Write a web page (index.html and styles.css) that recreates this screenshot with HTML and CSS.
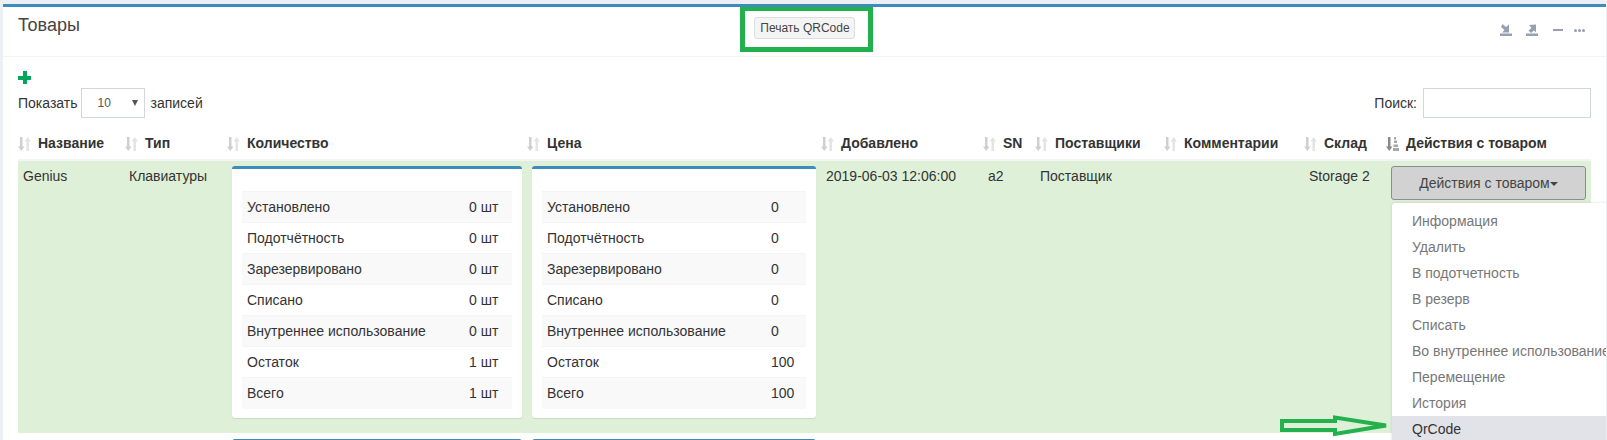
FILE: index.html
```html
<!DOCTYPE html>
<html lang="ru">
<head>
    <meta charset="UTF-8">
    <title>Товары</title>
    <link rel="stylesheet" href="styles.css">
</head>
<body>
    <!-- Sort icons, reused in every table head cell -->
    <svg class="sprites" width="0" height="0">
        <symbol id="sort-both" viewBox="0 0 13 14">
            <path d="M2 0h2.500v9.500H6.500L3.250 14 0 9.500h2z" fill="#cfcfcf"/>
            <path d="M8.500 14H11V4.500h2L9.750 0 6.500 4.500h2z" fill="#e4e4e4"/>
        </symbol>
        <symbol id="sort-active" viewBox="0 0 13 14">
            <path d="M2 0h2.500v9.500H6.500L3.250 14 0 9.500h2z" fill="#8a8a8a"/>
            <path d="M8 0h2v2.500H8zM8 3.500h3v2.500H8zM7.500 7.500h4.500v2.500H7.500zM7 11h6v3H7z" fill="#a8a8a8"/>
        </symbol>
    </svg>

    <section class="box">
        <header class="box-header">
            <h3 class="box-title">Товары</h3>
            <button class="btn-print">Печать QRCode</button>
            <div class="box-tools">
                <svg class="tool" viewBox="0 0 12 12"><path d="M0 9.500h12V12H0zM2.500 0l3.500 3 3-2.500V8.500H2l2.500-2.500L1 3z" fill="#97a0b3"/></svg>
                <svg class="tool" viewBox="0 0 12 12"><path d="M0 9.500h12V12H0zM10 0.500v8L8 6.500 5 9 2.500 6.500 5.500 4 3 1z" fill="#97a0b3"/></svg>
                <span class="tool-minus"></span>
                <span class="tool-dots"><i></i><i></i><i></i></span>
            </div>
        </header>

        <div class="box-body">
            <div class="add-icon"></div>
            <div class="table-controls">
                <label class="length">Показать
                    <span class="select-box"><span>10</span><b></b></span>
                    записей</label>
                <label class="search">Поиск: <span class="search-input"></span></label>
            </div>

            <table class="products">
                <thead>
                    <tr>
                        <th class="c-name"><svg class="sort"><use href="#sort-both"/></svg>Название</th>
                        <th class="c-type"><svg class="sort"><use href="#sort-both"/></svg>Тип</th>
                        <th class="c-qty"><svg class="sort"><use href="#sort-both"/></svg>Количество</th>
                        <th class="c-price"><svg class="sort"><use href="#sort-both"/></svg>Цена</th>
                        <th class="c-date"><svg class="sort"><use href="#sort-both"/></svg>Добавлено</th>
                        <th class="c-sn"><svg class="sort"><use href="#sort-both"/></svg>SN</th>
                        <th class="c-supplier"><svg class="sort"><use href="#sort-both"/></svg>Поставщики</th>
                        <th class="c-comment"><svg class="sort"><use href="#sort-both"/></svg>Комментарии</th>
                        <th class="c-store"><svg class="sort"><use href="#sort-both"/></svg>Склад</th>
                        <th class="c-actions"><svg class="sort"><use href="#sort-active"/></svg>Действия с товаром</th>
                    </tr>
                </thead>
                <tbody>
                    <tr class="row-success">
                        <td>Genius</td>
                        <td class="cell-type">Клавиатуры</td>
                        <td>
                            <div class="mini-box">
                                <table class="mini-table">
                                    <tr><td>Установлено</td><td class="num">0 шт</td></tr>
                                    <tr><td>Подотчётность</td><td class="num">0 шт</td></tr>
                                    <tr><td>Зарезервировано</td><td class="num">0 шт</td></tr>
                                    <tr><td>Списано</td><td class="num">0 шт</td></tr>
                                    <tr><td>Внутреннее использование</td><td class="num">0 шт</td></tr>
                                    <tr><td>Остаток</td><td class="num">1 шт</td></tr>
                                    <tr><td>Всего</td><td class="num">1 шт</td></tr>
                                </table>
                            </div>
                        </td>
                        <td>
                            <div class="mini-box">
                                <table class="mini-table">
                                    <tr><td>Установлено</td><td class="price">0</td></tr>
                                    <tr><td>Подотчётность</td><td class="price">0</td></tr>
                                    <tr><td>Зарезервировано</td><td class="price">0</td></tr>
                                    <tr><td>Списано</td><td class="price">0</td></tr>
                                    <tr><td>Внутреннее использование</td><td class="price">0</td></tr>
                                    <tr><td>Остаток</td><td class="price">100</td></tr>
                                    <tr><td>Всего</td><td class="price">100</td></tr>
                                </table>
                            </div>
                        </td>
                        <td>2019-06-03 12:06:00</td>
                        <td>a2</td>
                        <td>Поставщик</td>
                        <td></td>
                        <td>Storage 2</td>
                        <td><button class="btn-actions">Действия с товаром<b class="caret"></b></button></td>
                    </tr>
                    <tr class="row-next">
                        <td></td>
                        <td></td>
                        <td><div class="mini-box"></div></td>
                        <td><div class="mini-box"></div></td>
                        <td></td><td></td><td></td><td></td><td></td><td></td>
                    </tr>
                </tbody>
            </table>
        </div>

        <!-- Open actions menu -->
        <ul class="dropdown">
            <li>Информация</li>
            <li>Удалить</li>
            <li>В подотчетность</li>
            <li>В резерв</li>
            <li>Списать</li>
            <li>Во внутреннее использование</li>
            <li>Перемещение</li>
            <li>История</li>
            <li class="active">QrCode</li>
        </ul>

        <!-- Green marks drawn over the screenshot -->
        <div class="mark-rect"></div>
        <svg class="mark-arrow" width="112" height="26" viewBox="0 0 112 26">
            <path d="M2 8H55V4.500L106 12.500 55 21V17H2z" fill="none" stroke="#22b14c" stroke-width="4"/>
        </svg>
    </section>
</body>
</html>
```

FILE: styles.css
```css
* {
    box-sizing: border-box;
}

html, body {
    height: 440px;
    overflow: hidden;
}

body {
    margin: 0;
    padding: 4px 1px 0 3px;
    background-color: #ecf0f5;
    font-family: "Liberation Sans", Arial, sans-serif;
    font-size: 14px;
    line-height: 20px;
    color: #333;
}

.sprites {
    position: absolute;
}

/* Box */
.box {
    position: relative;
    height: 436px;
    overflow: hidden;
    background-color: #fff;
    border-top: 3px solid #3c8dbc;
}

.box-header {
    display: flex;
    align-items: flex-start;
    justify-content: space-between;
    height: 50px;
    padding: 0 15px;
    border-bottom: 1px solid #f4f4f4;
}

.box-title {
    margin: 8px 0 0;
    font-size: 18px;
    font-weight: normal;
    line-height: 20px;
    color: #444;
}

.btn-print {
    width: 101px;
    height: 22px;
    margin: 10px 0 0 30px;
    padding: 0;
    font-family: inherit;
    font-size: 12px;
    color: #444;
    background-color: #f4f4f4;
    border: 1px solid #ddd;
    border-radius: 3px;
}

.box-tools {
    display: flex;
    align-items: center;
    height: 12px;
    margin: 17px 6px 0 0;
}

.tool {
    width: 12px;
    height: 12px;
    margin-right: 14px;
}

.tool-minus {
    width: 10px;
    height: 2px;
    margin-left: 1px;
    background-color: #97a0b3;
}

.tool-dots {
    display: flex;
    gap: 1px;
    margin-left: 11px;
}

.tool-dots i {
    width: 3px;
    height: 3px;
    border-radius: 50%;
    background-color: #97a0b3;
}

.box-body {
    padding: 14px 15px 0;
}

.add-icon {
    position: relative;
    width: 13px;
    height: 13px;
    background:
        linear-gradient(#00a65a, #00a65a) center / 13px 4px no-repeat,
        linear-gradient(#00a65a, #00a65a) center / 4px 13px no-repeat;
}

/* Length and search */
.table-controls {
    display: flex;
    justify-content: space-between;
    margin-top: 4px;
}

.length, .search {
    display: flex;
    align-items: center;
}

.select-box {
    display: flex;
    align-items: center;
    justify-content: space-between;
    width: 64px;
    height: 30px;
    margin: 0 6px 0 3px;
    padding: 0 6px 0 16px;
    font-size: 12px;
    color: #555;
    border: 1px solid #d2d6de;
}

.select-box b {
    border-top: 6px solid #555;
    border-left: 3px solid transparent;
    border-right: 3px solid transparent;
}

.search-input {
    display: block;
    width: 168px;
    height: 30px;
    margin-left: 6px;
    border: 1px solid #d2d6de;
}

/* Main table */
.products {
    width: 1573px;
    margin-top: 5px;
    border-collapse: collapse;
    table-layout: fixed;
}

.products th {
    height: 37px;
    padding: 0 0 6px;
    text-align: left;
    vertical-align: bottom;
    white-space: nowrap;
    border-bottom: 2px solid #f4f4f4;
}

.sort {
    width: 13px;
    height: 14px;
    margin-right: 7px;
    vertical-align: -3px;
}

.products > tbody > tr > td {
    padding: 5px;
    vertical-align: top;
}

.products > tbody > tr > .cell-type {
    padding-left: 4px;
}

.products > tbody > .row-next > td {
    padding-top: 6px;
}

.c-name { width: 107px; }
.c-type { width: 102px; }
.c-qty { width: 300px; }
.c-price { width: 294px; }
.c-date { width: 162px; }
.c-sn { width: 52px; }
.c-supplier { width: 129px; }
.c-comment { width: 140px; }
.c-store { width: 82px; }
.c-actions { width: 205px; }

.row-success {
    background-color: #dff0d8;
}

.row-next .mini-box {
    height: 40px;
    margin-bottom: 0;
}

/* Cards with small tables */
.mini-box {
    height: 252px;
    margin-bottom: 10px;
    padding: 22px 10px 0;
    background-color: #fff;
    border-top: 3px solid #3c8dbc;
    border-radius: 3px;
    box-shadow: 0 1px 1px rgba(0, 0, 0, 0.1);
}

.mini-table {
    width: 100%;
    border-collapse: collapse;
}

.mini-table td {
    height: 31px;
    padding: 5px;
    border-top: 1px solid #f4f4f4;
}

.mini-table tr:nth-child(odd) {
    background-color: #f9f9f9;
}

.mini-table .num {
    width: 48px;
    white-space: nowrap;
}

.mini-table .price {
    width: 40px;
}

/* Actions button and menu */
.btn-actions {
    display: block;
    width: 195px;
    height: 34px;
    padding: 0;
    font-family: inherit;
    font-size: 14px;
    color: #444;
    background-color: #d2d2d2;
    border: 1px solid #8c8c8c;
    border-radius: 3px;
}

.caret {
    display: inline-block;
    vertical-align: middle;
    border-top: 4px solid #444;
    border-left: 4px solid transparent;
    border-right: 4px solid transparent;
}

.dropdown {
    position: absolute;
    top: 196px;
    left: 1389px;
    width: 240px;
    margin: 0;
    padding: 5px 0 0;
    list-style: none;
    background-color: #fff;
    border-radius: 3px;
    box-shadow: 0 0 3px rgba(0, 0, 0, 0.15);
}

.dropdown li {
    height: 26px;
    padding: 3px 20px;
    color: #777;
    white-space: nowrap;
}

.dropdown .active {
    color: #333;
    background-color: #e1e3e9;
}

/* Annotations */
.mark-rect {
    position: absolute;
    top: 0;
    left: 737px;
    width: 133px;
    height: 45px;
    border: 5px solid #22b14c;
    border-top-width: 4px;
}

.mark-arrow {
    position: absolute;
    top: 406px;
    left: 1277px;
}
```
